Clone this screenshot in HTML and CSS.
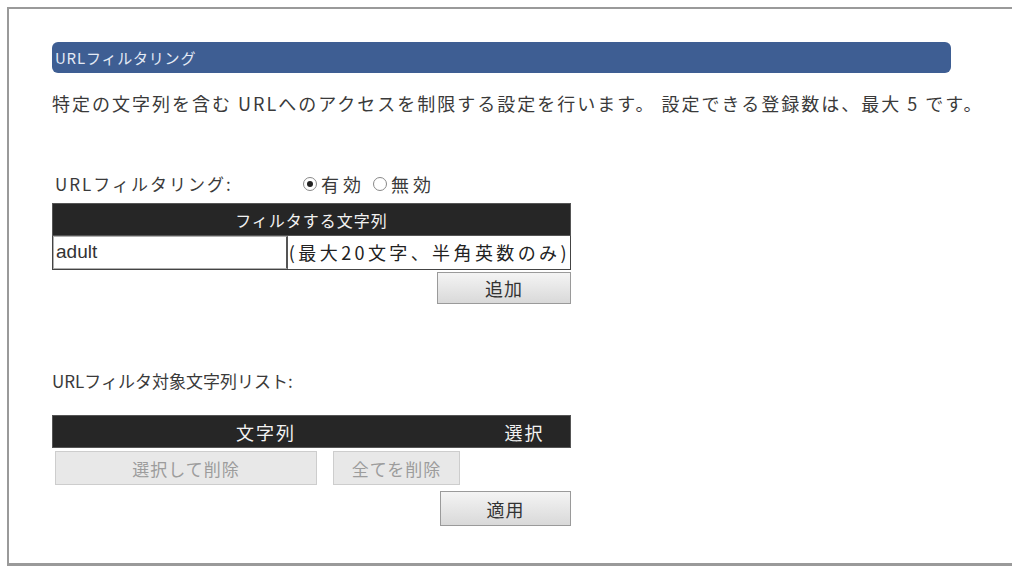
FILE: index.html
```html
<!DOCTYPE html>
<html lang="ja">
<head>
    <meta charset="UTF-8">
    <title>URLフィルタリング</title>
    <link rel="stylesheet" href="styles.css">
</head>
<body>
    <div class="frame">
        <div class="title-bar">URLフィルタリング</div>
        <p class="description">特定の文字列を含む URLへのアクセスを制限する設定を行います。 設定できる登録数は、最大 5 です。</p>

        <div class="setting-row">
            <span class="setting-label">URLフィルタリング:</span>
            <span class="radio-group">
                <span class="radio checked"></span>有効
                <span class="radio"></span>無効
            </span>
        </div>

        <div class="filter-table">
            <div class="table-head">フィルタする文字列</div>
            <div class="input-row">
                <div class="input-cell">adult</div>
                <div class="hint-cell">(最大20文字、半角英数のみ)</div>
            </div>
        </div>
        <div class="button-row">
            <button class="btn btn-add">追加</button>
        </div>

        <div class="list-label">URLフィルタ対象文字列リスト:</div>

        <div class="list-head">
            <span class="col-string">文字列</span>
            <span class="col-select">選択</span>
        </div>
        <div class="delete-row">
            <button class="btn btn-disabled btn-del-selected">選択して削除</button>
            <button class="btn btn-disabled btn-del-all">全てを削除</button>
        </div>
        <div class="button-row">
            <button class="btn btn-apply">適用</button>
        </div>
    </div>
</body>
</html>
```

FILE: styles.css
```css
/* ==================================== */
/* base                                 */
/* ==================================== */
body {
    margin: 0;
    padding: 0;
    background-color: #fff;
    font-family: "Noto Sans CJK JP", "Liberation Sans", sans-serif;
    color: #3a3a3a;
}

.frame {
    margin: 7px 0 0 7px;
    height: 559px;
    border-top: 2px solid #9a9a9a;
    border-left: 2px solid #9a9a9a;
    border-bottom: 3px solid #9a9a9a;
    padding: 33px 0 0 43px;
    box-sizing: border-box;
}

/* section title */
.title-bar {
    width: 899px;
    height: 31px;
    line-height: 31px;
    background-color: #3e5e93;
    border-radius: 6px;
    color: #e4eaf5;
    font-size: 15px;
    padding-left: 3px;
    box-sizing: border-box;
    letter-spacing: 0.8px;
}

.description {
    margin: 17px 0 0 0;
    font-size: 18px;
    line-height: 26px;
    letter-spacing: 2px;
    white-space: nowrap;
}

/* filter on/off */
.setting-row {
    margin-top: 56px;
    display: flex;
    align-items: center;
    font-size: 17px;
    line-height: 24px;
    padding-left: 3px;
}

.setting-label {
    width: 248px;
    letter-spacing: 2px;
}

.radio-group {
    display: flex;
    align-items: center;
    font-size: 18px;
    letter-spacing: 4px;
}

.radio {
    width: 14px;
    height: 14px;
    border: 1px solid #888;
    border-radius: 50%;
    margin-right: 4px;
    box-sizing: border-box;
    position: relative;
}

.radio-group .radio:nth-child(2) {
    margin-left: 8px;
}

.radio.checked::after {
    content: '';
    position: absolute;
    top: 3px;
    left: 3px;
    width: 6px;
    height: 6px;
    border-radius: 50%;
    background-color: #222;
}

/* filter string table */
.filter-table {
    margin-top: 7px;
    width: 519px;
}

.table-head {
    height: 33px;
    line-height: 33px;
    background-color: #262626;
    color: #f2f2f2;
    text-align: center;
    font-size: 16px;
    letter-spacing: 1px;
    border: 1px solid #555;
    box-sizing: border-box;
}

.input-row {
    display: flex;
    height: 34px;
    border: 1px solid #444;
    border-top: none;
    box-sizing: border-box;
}

.input-cell {
    width: 235px;
    border: 1px solid #b0b0b0;
    border-right: 2px solid #555;
    font-family: "Liberation Sans", sans-serif;
    font-size: 19px;
    line-height: 30px;
    padding-left: 2px;
    color: #333;
}

.hint-cell {
    flex: 1;
    font-size: 18px;
    line-height: 32px;
    padding-left: 1px;
    color: #222;
    letter-spacing: 3.4px;
    white-space: nowrap;
}

/* buttons */
.button-row {
    width: 519px;
    display: flex;
    justify-content: flex-end;
}

.btn {
    font-family: "Noto Sans CJK JP", sans-serif;
    font-size: 18px;
    color: #333;
    background: linear-gradient(#f4f4f4, #d9d9d9);
    border: 1px solid #9a9a9a;
    padding: 0;
    letter-spacing: 1px;
}

.btn-add {
    margin-top: 2px;
    width: 134px;
    height: 32px;
}

.list-label {
    margin-top: 65px;
    font-size: 17px;
    line-height: 24px;
}

/* list table */
.list-head {
    margin-top: 22px;
    width: 519px;
    height: 33px;
    line-height: 33px;
    background-color: #262626;
    color: #f2f2f2;
    font-size: 18px;
    display: flex;
    border: 1px solid #555;
    box-sizing: border-box;
    letter-spacing: 2px;
}

.col-string {
    width: 426px;
    text-align: center;
}

.col-select {
    flex: 1;
    text-align: center;
}

.delete-row {
    margin-top: 3px;
    padding-left: 3px;
    display: flex;
    gap: 16px;
}

.btn-disabled {
    background: #e8e8e8;
    border: 1px solid #cdcdcd;
    color: #9c9c9c;
    height: 34px;
    font-size: 17px;
}

.btn-del-selected {
    width: 262px;
}

.btn-del-all {
    width: 127px;
}

.btn-apply {
    margin-top: 6px;
    width: 131px;
    height: 35px;
}
```
